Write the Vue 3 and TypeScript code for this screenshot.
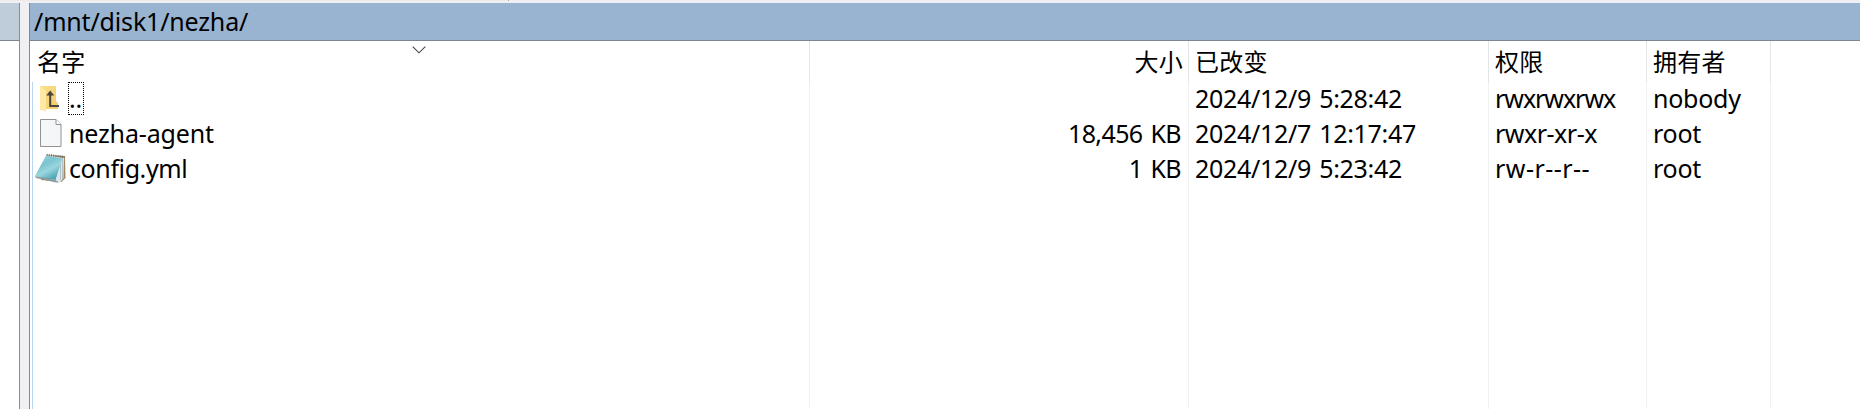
<script setup lang="ts">
interface FileRow {
  kind: 'parent' | 'file' | 'notepad'
  name: string
  size: string
  changed: string
  rights: string
  owner: string
}

const path = '/mnt/disk1/nezha/'

const rows: FileRow[] = [
  { kind: 'parent', name: '..', size: '', changed: '2024/12/9 5:28:42', rights: 'rwxrwxrwx', owner: 'nobody' },
  { kind: 'file', name: 'nezha-agent', size: '18,456 KB', changed: '2024/12/7 12:17:47', rights: 'rwxr-xr-x', owner: 'root' },
  { kind: 'notepad', name: 'config.yml', size: '1 KB', changed: '2024/12/9 5:23:42', rights: 'rw-r--r--', owner: 'root' },
]
</script>

<template>
  <div class="window">
    <div class="toolbar-edge"><i class="edge-a"></i></div>
    <div class="panes">
      <div class="local-pane"><div class="local-path"></div></div>
      <div class="splitter"></div>
      <div class="remote-pane">
        <div class="path-bar"><span>{{ path }}</span></div>
        <div class="listing">
          <div class="grid header">
            <div class="cell name">
              名字
              <svg class="sort" width="14" height="8" viewBox="0 0 14 8"><path d="M.7.7 7 6.8 13.3.7" fill="none" stroke="#444" stroke-width="1.1" /></svg>
            </div>
            <div class="cell size">大小</div>
            <div class="cell changed">已改变</div>
            <div class="cell rights">权限</div>
            <div class="cell owner">拥有者</div>
          </div>
          <div class="body">
            <div v-for="row in rows" :key="row.name" class="grid row" :class="row.kind">
              <div class="cell name">
                <svg class="icon" width="34" height="35" viewBox="0 0 34 35">
                  <defs>
                    <linearGradient id="folder" x1="0" y1="0" x2="1" y2="1"><stop offset="0" stop-color="#fbdf8c" /><stop offset="1" stop-color="#f2cd68" /></linearGradient>
                    <linearGradient id="cover" x1="0" y1="0" x2=".6" y2="1"><stop offset="0" stop-color="#a5d8e0" /><stop offset=".4" stop-color="#7cc4d0" /><stop offset=".65" stop-color="#9ad6de" /><stop offset="1" stop-color="#4aa3b6" /></linearGradient>
                  </defs>
                  <g v-if="row.kind === 'parent'">
                    <path d="M6 4H22V19L24 21V27H11L6 28Z" fill="url(#folder)" />
                    <path d="M6 4 12 9V30L6 27Z" fill="#ffe9a5" />
                    <path d="M16.2 11V24H25" fill="none" stroke="#4a4540" stroke-width="2" />
                    <path d="M12.2 13.5 16.2 8.5 20.2 13.5Z" fill="#4a4540" />
                  </g>
                  <g v-else-if="row.kind === 'file'">
                    <path d="M6.5 2.5H22L27 7.5V29.5H6.5Z" fill="#f5f6f8" stroke="#929292" />
                    <path d="M22 2.5V7.5H27" fill="#fff" stroke="#929292" />
                  </g>
                  <g v-else>
                    <path d="M14 3 31 4 31.5 26 27.5 30 7 28Z" fill="#a08a64" />
                    <path d="M14 3 30 6 29.5 26 26 30.5 18 28Z" fill="#dde7e8" />
                    <path d="M28.5 6V27M26.5 11V28" stroke="#a7b9bc" stroke-width=".8" />
                    <path d="M12 3.5 28.5 6.5 21.5 28 1 24Z" fill="url(#cover)" />
                    <path d="M1 24 21.5 28 25 30.5 22 30.5 2 26Z" fill="#8a9da1" />
                    <path d="M12.5 2.8 30.5 5" stroke="#71685c" stroke-width="2" stroke-dasharray="1.2 1" />
                  </g>
                </svg>
                <span class="label">{{ row.name }}</span>
              </div>
              <div class="cell size">{{ row.size }}</div>
              <div class="cell changed">{{ row.changed }}</div>
              <div class="cell rights">{{ row.rights }}</div>
              <div class="cell owner">{{ row.owner }}</div>
            </div>
            <div class="grid filler">
              <div v-for="n in 5" :key="n" class="cell"></div>
            </div>
          </div>
        </div>
      </div>
    </div>
  </div>
</template>

<style>
body {
  margin: 0;
  overflow: hidden;
}
</style>

<style scoped>
.window {
  display: flex;
  flex-direction: column;
  width: 1860px;
  height: 409px;
  background: #fff;
  color: #000;
  font-family: 'Noto Sans', 'Noto Sans CJK SC', sans-serif;
  font-size: 25px;
  white-space: nowrap;
}
.toolbar-edge {
  display: flex;
  height: 3px;
  background: #f0eff3;
}
.edge-a {
  width: 508px;
  height: 1px;
  background: #f0e9ec;
  border-right: 1px solid #a9a9ad;
}
.panes {
  display: flex;
  flex: 1;
}
.local-pane {
  width: 19px;
  border-right: 1px solid #8b8d92;
}
.local-path {
  height: 37px;
  background: #bfcddb;
  border-bottom: 1px solid #7f858c;
}
.splitter {
  width: 9px;
  background: #f0f0f2;
}
.remote-pane {
  display: flex;
  flex: 1;
  flex-direction: column;
  border-left: 1px solid #85898f;
}
.path-bar {
  height: 37px;
  padding-left: 4px;
  background: #99b4d1;
  border-bottom: 1px solid #7f858c;
  line-height: 36px;
  letter-spacing: -0.17px;
}
.listing {
  display: flex;
  flex: 1;
  flex-direction: column;
}
.grid {
  display: grid;
  grid-template-columns: 778px 379px 300px 158px 124px;
  padding-left: 2px;
}
.cell {
  box-sizing: border-box;
  padding-left: 6px;
  border-right: 1px solid #f1f1f1;
}
.header {
  height: 41px;
  font-size: 24px;
  letter-spacing: 0.3px;
  line-height: 42px;
}
.header .cell {
  border-color: #e3e4e6;
}
.header .name {
  position: relative;
  padding-left: 5px;
}
.header .size {
  padding-right: 5px;
}
.sort {
  position: absolute;
  left: 380px;
  top: 5px;
}
.body {
  display: flex;
  flex: 1;
  flex-direction: column;
  margin-left: 2px;
  border-left: 1px solid #b9d7f3;
}
.body .grid {
  grid-template-columns: 777px 379px 300px 158px 124px;
  padding-left: 0;
}
.row {
  height: 35px;
  line-height: 33px;
}
.row .name {
  display: flex;
  padding-left: 0;
}
.icon {
  flex: none;
  margin-left: 1px;
}
.label {
  padding-left: 1px;
  letter-spacing: -0.15px;
}
.notepad .label {
  letter-spacing: -0.4px;
}
.parent .label {
  box-sizing: border-box;
  width: 16px;
  height: 33px;
  padding-left: 0;
  border: 1px dotted #000;
  line-height: 31px;
}
.size {
  padding-right: 7px;
  text-align: right;
}
.row .size {
  letter-spacing: -0.6px;
  word-spacing: 2px;
}
.row .changed {
  letter-spacing: -0.3px;
  word-spacing: 2px;
}
.row .rights {
  letter-spacing: -1.05px;
}
.file .rights {
  letter-spacing: -0.5px;
}
.notepad .rights {
  letter-spacing: 0.45px;
}
.row .owner {
  letter-spacing: -0.25px;
}
.filler {
  flex: 1;
}
</style>
